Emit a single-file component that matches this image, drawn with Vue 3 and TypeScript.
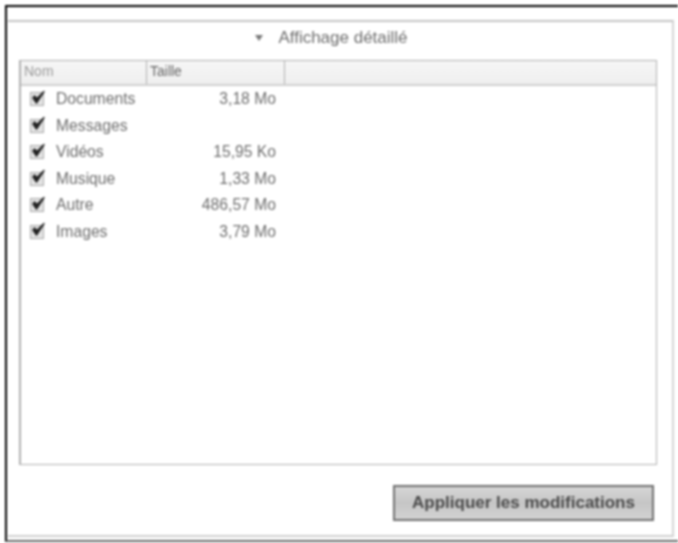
<script setup lang="ts">
interface Row { name: string; size: string }
const rows: Row[] = [
  { name: 'Documents', size: '3,18 Mo' },
  { name: 'Messages', size: '' },
  { name: 'Vidéos', size: '15,95 Ko' },
  { name: 'Musique', size: '1,33 Mo' },
  { name: 'Autre', size: '486,57 Mo' },
  { name: 'Images', size: '3,79 Mo' },
]
</script>

<template>
  <div class="page">
    <div class="frame">
      <section class="panel">
        <header class="title">
          <span class="arrow"></span>
          <span>Affichage détaillé</span>
        </header>
        <div class="table">
          <div class="thead">
            <div class="th name">Nom</div>
            <div class="th size">Taille</div>
            <div class="th rest"></div>
          </div>
          <div class="tbody">
            <div v-for="r in rows" :key="r.name" class="row">
              <span class="check">
                <svg viewBox="0 0 16 16" width="16" height="16">
                  <path d="M3 8 L6.5 13 L14 1.5 L7 8.5 L4.5 6 Z" fill="#222" stroke="#222" stroke-width="1.4" stroke-linejoin="round" />
                </svg>
              </span>
              <span class="cell-name">{{ r.name }}</span>
              <span class="cell-size">{{ r.size }}</span>
            </div>
          </div>
        </div>
        <footer class="actions">
          <button class="apply" type="button">Appliquer les modifications</button>
        </footer>
      </section>
    </div>
  </div>
</template>

<style>
html, body { margin: 0; background: #fff; }
</style>

<style scoped>
.page {
  width: 678px;
  height: 543px;
  box-sizing: border-box;
  padding-top: 5px;
  padding-left: 5px;
  overflow: hidden;
  background: #fff;
  font-family: "Liberation Sans", Arial, sans-serif;
  filter: blur(0.8px);
}
.frame {
  width: 673px;
  height: 537px;
  box-sizing: border-box;
  border-top: 2px solid #000;
  border-left: 2px solid #000;
  border-bottom: 2px solid #666;
  padding: 13px 4px 3px 1px;
}
.panel {
  height: 100%;
  box-sizing: border-box;
  border-top: 2px solid #c4c4c4;
  border-right: 2px solid #d4d4d4;
  border-bottom: 2px solid #cfcfcf;
  padding: 0 15px 0 11px;
  display: flex;
  flex-direction: column;
}
.title {
  height: 38px;
  display: flex;
  align-items: center;
  justify-content: center;
  gap: 15px;
  font-size: 17px;
  color: #6e6e6e;
  box-sizing: border-box;
  padding-bottom: 7px;
  padding-right: 13px;
}
.arrow {
  width: 0;
  height: 0;
  border-left: 4px solid transparent;
  border-right: 4px solid transparent;
  border-top: 6px solid #777;
}
.table {
  height: 405px;
  box-sizing: border-box;
  border: 1px solid #b0b0b0;
  border-left-width: 2px;
  display: flex;
  flex-direction: column;
}
.thead {
  height: 23px;
  flex: none;
  display: flex;
  background: linear-gradient(#f6f6f6, #efefef);
  border-bottom: 2px solid #d0d0d0;
}
.th {
  font-size: 14px;
  line-height: 16px;
  color: #999;
  padding: 2px 0 0 3px;
  box-sizing: border-box;
  border-right: 1px solid #b0b0b0;
}
.th.name { width: 126px; }
.th.size { width: 138px; color: #666; }
.th.rest { flex: 1; border-right: 0; }
.tbody {
  display: flex;
  flex-direction: column;
}
.row {
  height: 26.5px;
  display: flex;
  align-items: center;
  font-size: 15.7px;
  line-height: 24px;
  color: #6e6e6e;
}
.check {
  width: 14px;
  height: 14px;
  margin-left: 9px;
  margin-right: 12px;
  box-sizing: border-box;
  border: 1px solid #aaa;
  background: #e4e4e4;
  display: flex;
  align-items: center;
  justify-content: center;
  flex: none;
}
.check svg { margin-top: -3px; margin-left: 1px; flex: none; }
.cell-name { width: 101px; white-space: nowrap; }
.cell-size { width: 119px; text-align: right; white-space: nowrap; }
.actions {
  flex: 1;
  display: flex;
  justify-content: flex-end;
  padding-top: 20px;
  padding-right: 3px;
}
.apply {
  width: 261px;
  height: 36px;
  box-sizing: border-box;
  border: 2px solid #707070;
  background: linear-gradient(#d6d6d6, #c6c6c6 50%, #d2d2d2);
  font-family: "Liberation Sans", Arial, sans-serif;
  font-size: 17px;
  font-weight: bold;
  color: #4a4a4a;
  padding: 0;
}
</style>
